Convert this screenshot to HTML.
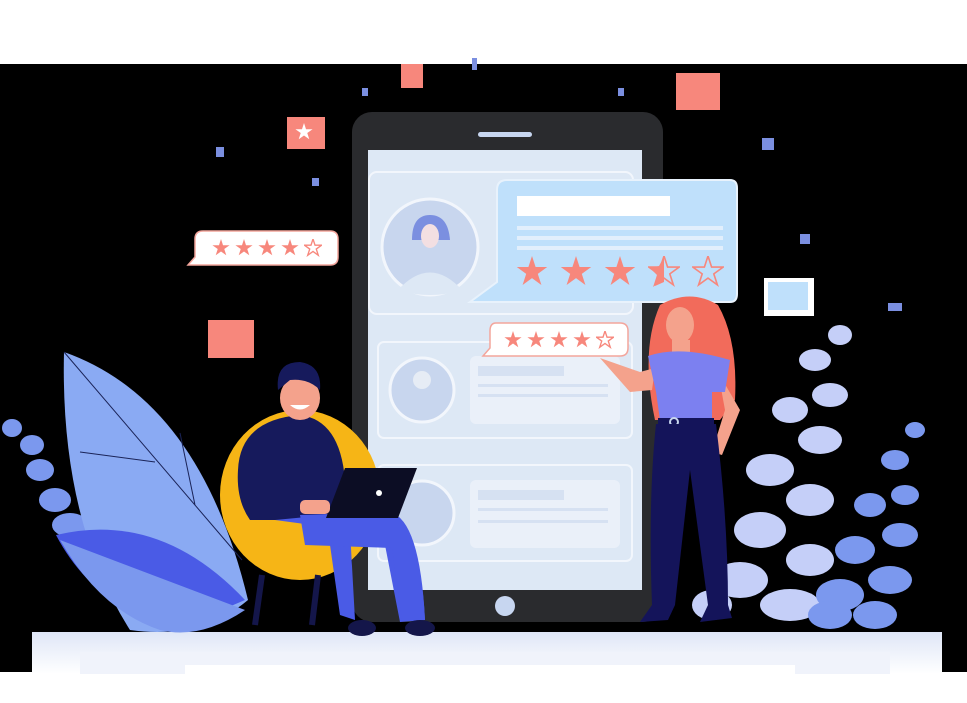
<!DOCTYPE html>
<html><head><meta charset="utf-8"><style>html,body{margin:0;padding:0;background:#fff}svg{display:block}</style></head>
<body>
<svg width="967" height="703" viewBox="0 0 967 703" xmlns="http://www.w3.org/2000/svg">
<defs>
<symbol id="st" viewBox="-1 -1 2 2"><polygon points="0,-1 0.2245,-0.309 0.951,-0.309 0.363,0.118 0.588,0.809 0,0.382 -0.588,0.809 -0.363,0.118 -0.951,-0.309 -0.2245,-0.309"/></symbol>
<linearGradient id="fl" x1="0" y1="0" x2="0" y2="1"><stop offset="0" stop-color="#dfe6f7"/><stop offset="1" stop-color="#ffffff"/></linearGradient>
</defs>
<rect width="967" height="703" fill="#fff"/>
<rect x="0" y="64" width="967" height="608" fill="#000"/>
<rect x="32" y="632" width="910" height="42" fill="url(#fl)"/>
<rect x="80" y="652" width="810" height="22" fill="#f0f3fb"/>
<rect x="185" y="665" width="610" height="38" fill="#fff"/>
<rect x="401" y="64" width="22" height="24" fill="#f7877c"/>
<rect x="676" y="73" width="44" height="37" fill="#f7877c"/>
<rect x="208" y="320" width="46" height="38" fill="#f7877c"/>
<rect x="287" y="117" width="38" height="32" fill="#f7877c"/>
<use href="#st" x="295" y="123" width="18" height="18" fill="#fff"/>
<rect x="472" y="58" width="5" height="12" fill="#7b8fe0"/>
<rect x="362" y="88" width="6" height="8" fill="#7b8fe0"/>
<rect x="618" y="88" width="6" height="8" fill="#7b8fe0"/>
<rect x="216" y="147" width="8" height="10" fill="#7b8fe0"/>
<rect x="312" y="178" width="7" height="8" fill="#7b8fe0"/>
<rect x="762" y="138" width="12" height="12" fill="#7b8fe0"/>
<rect x="800" y="234" width="10" height="10" fill="#7b8fe0"/>
<rect x="888" y="303" width="14" height="8" fill="#7b8fe0"/>
<rect x="764" y="278" width="50" height="38" fill="#fff"/>
<rect x="768" y="282" width="40" height="28" fill="#bfe0fb"/>
<rect x="352" y="112" width="311" height="510" rx="20" fill="#2a2b2e"/>
<rect x="478" y="132" width="54" height="5" rx="2.5" fill="#c7d6f0"/>
<rect x="368" y="150" width="274" height="440" fill="#dde8f5"/>
<ellipse cx="505" cy="606" rx="10" ry="10" fill="#c7d6f0"/>
<rect x="369" y="172" width="264" height="142" rx="8" fill="none" stroke="#f2f6fc" stroke-width="2"/>
<circle cx="430" cy="247" r="48" fill="#c8d6ee" stroke="#f2f6fc" stroke-width="3"/>
<path d="M398,290 Q430,255 462,290 Q430,300 398,290Z" fill="#dde8f5"/>
<path d="M412,240 Q412,215 430,215 Q448,215 450,240 Z" fill="#7b8fe0"/>
<ellipse cx="430" cy="236" rx="9" ry="12" fill="#f3dfe2"/>
<rect x="378" y="342" width="254" height="96" rx="6" fill="none" stroke="#f2f6fc" stroke-width="2"/>
<circle cx="422" cy="390" r="32" fill="#c8d6ee" stroke="#f2f6fc" stroke-width="3"/>
<circle cx="422" cy="380" r="9" fill="#e6ecf5"/>
<rect x="470" y="356" width="150" height="68" rx="6" fill="#eaf0f9"/>
<rect x="478" y="366" width="86" height="10" fill="#d6e1f2"/>
<rect x="478" y="384" width="130" height="3" fill="#d6e1f2"/><rect x="478" y="394" width="130" height="3" fill="#d6e1f2"/>
<rect x="378" y="465" width="254" height="96" rx="6" fill="none" stroke="#f2f6fc" stroke-width="2"/>
<circle cx="422" cy="513" r="32" fill="#c8d6ee" stroke="#f2f6fc" stroke-width="3"/>
<rect x="470" y="480" width="150" height="68" rx="6" fill="#eaf0f9"/>
<rect x="478" y="490" width="86" height="10" fill="#d6e1f2"/>
<rect x="478" y="508" width="130" height="3" fill="#d6e1f2"/><rect x="478" y="520" width="130" height="3" fill="#d6e1f2"/>
<path d="M507,180 H730 Q737,180 737,188 V294 Q737,302 730,302 H470 L497,282 V190 Q497,180 507,180Z" fill="#bfe0fb" stroke="#e8f2fc" stroke-width="2"/>
<rect x="517" y="196" width="153" height="20" fill="#fff"/>
<rect x="517" y="226" width="206" height="4" fill="#e2effc"/><rect x="517" y="236" width="206" height="4" fill="#e2effc"/><rect x="517" y="246" width="206" height="4" fill="#e2effc"/>
<g fill="#f7877c"><use href="#st" x="516" y="256" width="32" height="32"/><use href="#st" x="560" y="256" width="32" height="32"/><use href="#st" x="604" y="256" width="32" height="32"/></g>
<use href="#st" x="648" y="256" width="32" height="32" fill="none" stroke="#f7877c" stroke-width="0.1"/>
<path d="M664,257 V282 L655,286 L657,275 L650,268 L659,266Z" fill="#f7877c"/>
<use href="#st" x="692" y="256" width="32" height="32" fill="none" stroke="#f7877c" stroke-width="0.1"/>
<path d="M496,323 H620 Q628,323 628,331 V348 Q628,356 620,356 H483 L490,348 V331 Q490,323 496,323Z" fill="#fff" stroke="#f3a59c" stroke-width="1.5"/>
<g fill="#f7877c"><use href="#st" x="504" y="331" width="18" height="18"/><use href="#st" x="527" y="331" width="18" height="18"/><use href="#st" x="550" y="331" width="18" height="18"/><use href="#st" x="573" y="331" width="18" height="18"/></g>
<use href="#st" x="596" y="331" width="18" height="18" fill="none" stroke="#f7877c" stroke-width="0.15"/>
<path d="M203,231 H330 Q338,231 338,239 V257 Q338,265 330,265 H188 L195,257 V239 Q195,231 203,231Z" fill="#fff" stroke="#f3a59c" stroke-width="1.5"/>
<g fill="#f7877c"><use href="#st" x="212" y="239" width="18" height="18"/><use href="#st" x="235" y="239" width="18" height="18"/><use href="#st" x="258" y="239" width="18" height="18"/><use href="#st" x="281" y="239" width="18" height="18"/></g>
<use href="#st" x="304" y="239" width="18" height="18" fill="none" stroke="#f7877c" stroke-width="0.15"/>
<g fill="#7b98ee">
<ellipse cx="12" cy="428" rx="10" ry="9"/><ellipse cx="32" cy="445" rx="12" ry="10"/><ellipse cx="40" cy="470" rx="14" ry="11"/><ellipse cx="55" cy="500" rx="16" ry="12"/><ellipse cx="70" cy="525" rx="18" ry="12"/>
</g>
<path d="M64,352 Q200,400 248,600 Q200,640 130,630 Q60,520 64,352Z" fill="#8aaaf3"/>
<path d="M64,352 L242,560 M80,452 L155,462 M180,433 L195,505" stroke="#1a2357" stroke-width="1" fill="none"/>
<path d="M56,535 Q160,510 245,600 Q200,620 160,625 Q90,600 56,535Z" fill="#4a5be6"/>
<path d="M60,540 Q100,610 160,630 Q200,640 245,610 L60,540Z" fill="#7b98ee"/>
<g fill="#c5cff8">
<ellipse cx="840" cy="335" rx="12" ry="10"/><ellipse cx="815" cy="360" rx="16" ry="11"/><ellipse cx="830" cy="395" rx="18" ry="12"/><ellipse cx="790" cy="410" rx="18" ry="13"/><ellipse cx="820" cy="440" rx="22" ry="14"/><ellipse cx="770" cy="470" rx="24" ry="16"/><ellipse cx="810" cy="500" rx="24" ry="16"/><ellipse cx="760" cy="530" rx="26" ry="18"/><ellipse cx="810" cy="560" rx="24" ry="16"/><ellipse cx="740" cy="580" rx="28" ry="18"/><ellipse cx="790" cy="605" rx="30" ry="16"/><ellipse cx="712" cy="605" rx="20" ry="15"/>
</g>
<g fill="#7b98ee">
<ellipse cx="915" cy="430" rx="10" ry="8"/><ellipse cx="895" cy="460" rx="14" ry="10"/><ellipse cx="905" cy="495" rx="14" ry="10"/><ellipse cx="870" cy="505" rx="16" ry="12"/><ellipse cx="900" cy="535" rx="18" ry="12"/><ellipse cx="855" cy="550" rx="20" ry="14"/><ellipse cx="890" cy="580" rx="22" ry="14"/><ellipse cx="840" cy="595" rx="24" ry="16"/><ellipse cx="875" cy="615" rx="22" ry="14"/><ellipse cx="830" cy="615" rx="22" ry="14"/>
</g>
<ellipse cx="300" cy="495" rx="80" ry="85" fill="#f6b516"/>
<path d="M262,575 L255,625 M318,575 L312,625" stroke="#14164a" stroke-width="6"/>
<path d="M238,470 Q240,420 300,415 Q340,420 345,480 L340,520 L250,520 Q236,500 238,470Z" fill="#161a5c"/>
<path d="M275,520 L380,510 Q420,520 425,620 L400,622 L385,545 L330,545 L340,615 L355,620 L350,530 Z" fill="#4a5be6"/>
<path d="M300,515 L390,512 Q420,520 425,620 L402,620 L392,548 L305,545 Z" fill="#4a5be6"/>
<ellipse cx="362" cy="628" rx="14" ry="8" fill="#14164a"/><ellipse cx="420" cy="628" rx="15" ry="8" fill="#14164a"/>
<path d="M345,468 L417,468 L398,518 L326,518Z" fill="#0c0d24"/>
<circle cx="379" cy="493" r="3" fill="#fff"/>
<rect x="300" y="500" width="30" height="14" rx="5" fill="#f4a28c"/>
<ellipse cx="300" cy="398" rx="20" ry="22" fill="#f4a28c"/>
<path d="M278,390 Q275,362 300,362 Q322,365 320,390 Q308,378 290,380 Z" fill="#161a5c"/>
<path d="M290,405 Q300,414 310,405Z" fill="#fff"/>
<path d="M660,305 Q690,288 718,305 Q738,340 735,400 L720,420 L655,420 Q640,350 660,305Z" fill="#f26b5b"/>
<ellipse cx="680" cy="325" rx="14" ry="18" fill="#f4a28c"/>
<path d="M672,340 L690,340 L690,358 L672,358Z" fill="#f4a28c"/>
<path d="M600,358 L640,372 L655,368 L652,390 L630,392 Z" fill="#f4a28c"/>
<path d="M718,372 L740,410 L722,455 L712,452 L725,410Z" fill="#f4a28c"/>
<path d="M648,356 Q680,345 730,360 L725,392 L712,392 L712,420 L660,420 L656,392 Z" fill="#7c80f0"/>
<rect x="658" y="418" width="56" height="8" fill="#14145a"/>
<circle cx="674" cy="422" r="4" fill="none" stroke="#c8d6ee" stroke-width="2"/>
<path d="M656,424 L716,424 Q728,520 728,605 L708,605 L690,470 L675,605 L652,605 Q648,500 656,424Z" fill="#14145a"/>
<path d="M652,605 L675,605 L668,620 L640,622Z" fill="#14145a"/>
<path d="M708,605 L728,605 L732,618 L700,622Z" fill="#14145a"/>
</svg>
</body></html>
